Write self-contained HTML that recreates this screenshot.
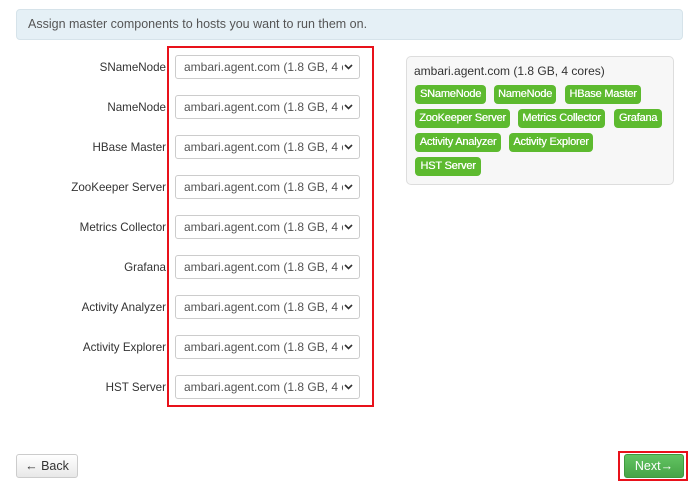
<!DOCTYPE html>
<html><head><style>
body{margin:0;width:698px;height:481px;background:#fff;font-family:"Liberation Sans",sans-serif;position:relative;overflow:hidden;color:#333}
.a{position:absolute}
.alert{left:16px;top:9px;background:#e5f0f6;border:1px solid #d6e3ea;border-radius:4px;font-size:12.5px;color:#555;line-height:29px;padding-left:11px;box-sizing:border-box;width:667px;height:31px}
.red{left:167px;top:46px;width:203px;height:357px;border:2px solid #e8111a}
.lbl{position:absolute;right:532px;font-size:11.6px;color:#333;line-height:24px;white-space:nowrap;margin-top:1px}
.sel{position:absolute;left:175px;height:22px;border:1px solid #ccc;border-radius:3px;background:#fff;font-size:12px;color:#555;line-height:22px;box-sizing:content-box;width:183px}
.sel span{position:absolute;left:8px;top:0;width:159px;overflow:hidden;white-space:nowrap}
.sel svg{position:absolute;right:6px;top:8px}
.panel{left:406px;top:56px;width:266px;height:127px;border:1px solid #ddd;border-radius:5px;background:#f7f7f7}
.ptitle{left:414px;top:64px;font-size:12px;color:#333}
.b{position:absolute;height:19px;line-height:19px;background:#5dba2f;color:#fff;font-size:11px;border-radius:4px;text-align:center;white-space:nowrap;letter-spacing:-0.2px;text-shadow:0.3px 0 0 #fff}
.btn{position:absolute;top:454px;height:22px;border-radius:3px;font-size:12.5px;line-height:22px;text-align:center}
</style></head><body>
<div class="a alert">Assign master components to hosts you want to run them on.</div>
<div class="a red"></div>

<div class="lbl" style="top:55px">SNameNode</div>
<div class="lbl" style="top:95px">NameNode</div>
<div class="lbl" style="top:135px">HBase Master</div>
<div class="lbl" style="top:175px">ZooKeeper Server</div>
<div class="lbl" style="top:215px">Metrics Collector</div>
<div class="lbl" style="top:255px">Grafana</div>
<div class="lbl" style="top:295px">Activity Analyzer</div>
<div class="lbl" style="top:335px">Activity Explorer</div>
<div class="lbl" style="top:375px">HST Server</div>

<div class="sel" style="top:55px"><span>ambari.agent.com (1.8 GB, 4 cores)</span><svg width="9" height="6"><path d="M1 1l3.5 3.5L8 1" stroke="#333" stroke-width="1.6" fill="none"/></svg></div>
<div class="sel" style="top:95px"><span>ambari.agent.com (1.8 GB, 4 cores)</span><svg width="9" height="6"><path d="M1 1l3.5 3.5L8 1" stroke="#333" stroke-width="1.6" fill="none"/></svg></div>
<div class="sel" style="top:135px"><span>ambari.agent.com (1.8 GB, 4 cores)</span><svg width="9" height="6"><path d="M1 1l3.5 3.5L8 1" stroke="#333" stroke-width="1.6" fill="none"/></svg></div>
<div class="sel" style="top:175px"><span>ambari.agent.com (1.8 GB, 4 cores)</span><svg width="9" height="6"><path d="M1 1l3.5 3.5L8 1" stroke="#333" stroke-width="1.6" fill="none"/></svg></div>
<div class="sel" style="top:215px"><span>ambari.agent.com (1.8 GB, 4 cores)</span><svg width="9" height="6"><path d="M1 1l3.5 3.5L8 1" stroke="#333" stroke-width="1.6" fill="none"/></svg></div>
<div class="sel" style="top:255px"><span>ambari.agent.com (1.8 GB, 4 cores)</span><svg width="9" height="6"><path d="M1 1l3.5 3.5L8 1" stroke="#333" stroke-width="1.6" fill="none"/></svg></div>
<div class="sel" style="top:295px"><span>ambari.agent.com (1.8 GB, 4 cores)</span><svg width="9" height="6"><path d="M1 1l3.5 3.5L8 1" stroke="#333" stroke-width="1.6" fill="none"/></svg></div>
<div class="sel" style="top:335px"><span>ambari.agent.com (1.8 GB, 4 cores)</span><svg width="9" height="6"><path d="M1 1l3.5 3.5L8 1" stroke="#333" stroke-width="1.6" fill="none"/></svg></div>
<div class="sel" style="top:375px"><span>ambari.agent.com (1.8 GB, 4 cores)</span><svg width="9" height="6"><path d="M1 1l3.5 3.5L8 1" stroke="#333" stroke-width="1.6" fill="none"/></svg></div>

<div class="a panel"></div>
<div class="a ptitle">ambari.agent.com (1.8 GB, 4 cores)</div>
<div class="b" style="left:415px;top:85px;width:71px">SNameNode</div>
<div class="b" style="left:494px;top:85px;width:62px">NameNode</div>
<div class="b" style="left:565px;top:85px;width:76px">HBase Master</div>
<div class="b" style="left:415px;top:109px;width:95px">ZooKeeper Server</div>
<div class="b" style="left:518px;top:109px;width:87px">Metrics Collector</div>
<div class="b" style="left:614px;top:109px;width:48px">Grafana</div>
<div class="b" style="left:415px;top:133px;width:86px">Activity Analyzer</div>
<div class="b" style="left:509px;top:133px;width:84px">Activity Explorer</div>
<div class="b" style="left:415px;top:157px;width:66px">HST Server</div>

<div class="btn" style="left:16px;width:60px;border:1px solid #ccc;background:linear-gradient(#fff,#e8e8e8);color:#333">← Back</div>
<div class="a" style="left:618px;top:451px;width:66px;height:26px;border:2px solid #e8111a"></div>
<div class="btn" style="left:624px;width:58px;border:1px solid #3e9a3e;background:linear-gradient(#62c462,#47a447);color:#fff">Next→</div>
</body></html>
